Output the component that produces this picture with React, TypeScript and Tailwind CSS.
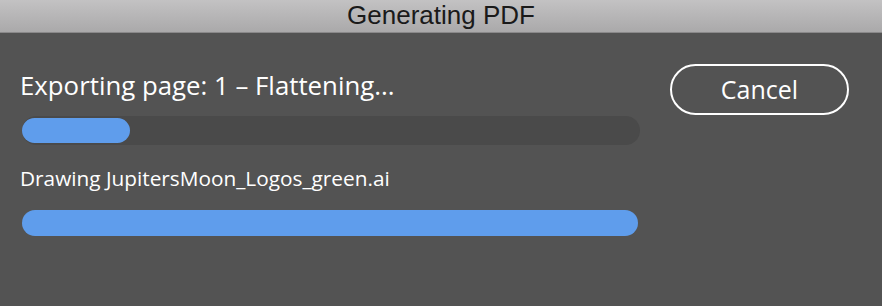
export default function App() {
  return (
    <div className="w-[882px] h-[306px] bg-[#535353] flex flex-col overflow-hidden">
      <div className="h-[33px] shrink-0 bg-gradient-to-b from-[#c3c2c3] to-[#aaa9aa] border-b border-[#8a898a] flex items-center justify-center">
        <span className="text-[26px] leading-none text-[#1a1a1a] font-['Liberation_Sans',sans-serif] -mt-[2px]">Generating PDF</span>
      </div>
      <div className="flex flex-1">
        <div className="w-[640px] pl-[20px] flex flex-col">
          <div className="mt-[37px] text-[25.8px] leading-[30px] text-white font-['Open_Sans',sans-serif] font-medium">Exporting page: 1 – Flattening...</div>
          <div className="mt-[16px] ml-[2px] h-[29px] w-[618px] rounded-full bg-[#4a4a4a] flex items-center">
            <div className="h-[25px] w-[108px] rounded-full bg-[#5f9dec]" />
          </div>
          <div className="mt-[21px] text-[20.8px] leading-[24px] text-white font-['Open_Sans',sans-serif] font-medium">Drawing JupitersMoon_Logos_green.ai</div>
          <div className="mt-[20px] ml-[2px] h-[26px] w-[616px] rounded-full bg-[#5f9dec]" />
        </div>
        <div className="pl-[30px] pt-[31px]">
          <button className="w-[179px] h-[51px] rounded-full border-2 border-white text-white text-[25px] font-['Open_Sans',sans-serif] font-medium flex items-center justify-center">Cancel</button>
        </div>
      </div>
    </div>
  );
}
